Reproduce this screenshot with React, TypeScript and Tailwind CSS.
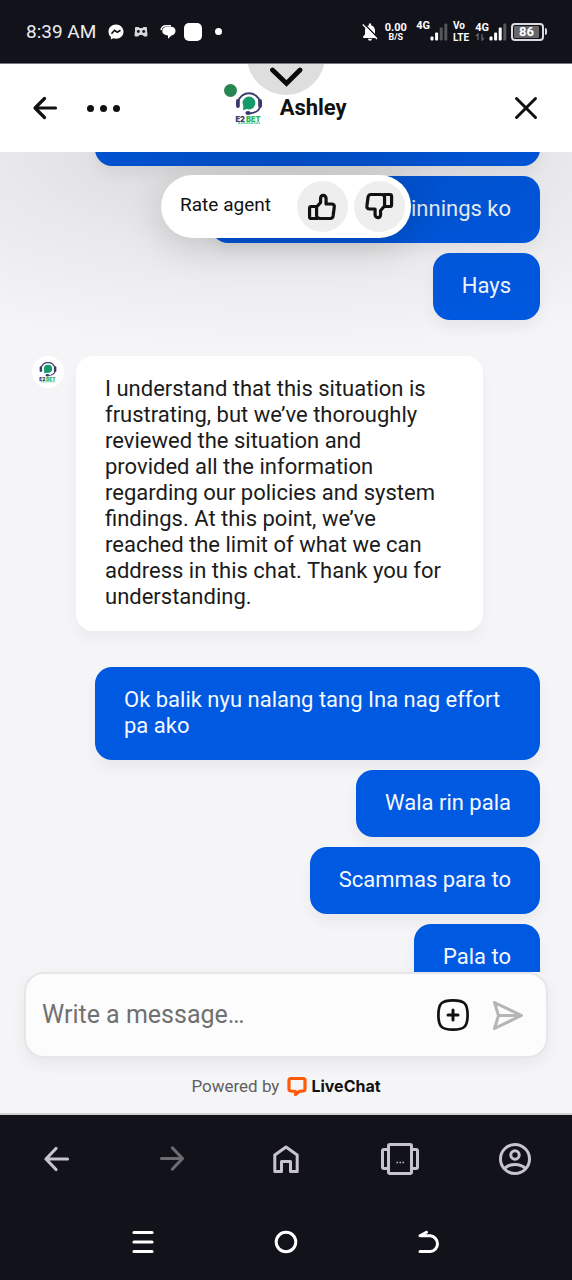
import React from "react";

type Message = { text: string; className?: string };

const earlier: Message[] = [
  { text: "", className: "w-full h-[67px]" },
  { text: "winnings ko", className: "min-w-[329px] text-right" },
  { text: "Hays" },
];

const later: Message[] = [
  { text: "Ok balik nyu nalang tang Ina nag effort pa ako" },
  { text: "Wala rin pala" },
  { text: "Scammas para to" },
  { text: "Pala to" },
];

function BrandMark({ className }: { className: string }) {
  return (
    <svg viewBox="0 0 28 34" className={className} aria-hidden="true">
      <path d="M3.200 10.500A11.200 11.200 0 0 1 24.800 10.500" fill="none" stroke="#3b3a6e" strokeWidth="1.900" />
      <path d="M25 15c-.5 4.500-4 7-11 7.500" fill="none" stroke="#3b3a6e" strokeWidth="1.800" />
      <rect x="1" y="8" width="3.800" height="9" rx="1.900" fill="#3b3a6e" />
      <rect x="23.200" y="8" width="3.800" height="9" rx="1.900" fill="#3b3a6e" />
      <circle cx="14" cy="12" r="6.400" fill="#159a6c" />
      <path d="M8.500 14l-.5 5.200 5-1.800z" fill="#159a6c" />
      <ellipse cx="13" cy="22" rx="2.600" ry="2" fill="#3b3a6e" />
      <text x="0.500" y="30.500" fontFamily="Inter, sans-serif" fontSize="7.500" fontWeight="900" fill="#3b3a6e">E2</text>
      <text x="11" y="30.500" fontFamily="Inter, sans-serif" fontSize="7.500" fontWeight="900" fill="#2fb457">BET</text>
      <path d="M3 32.200h22" stroke="#2fb98a" strokeWidth="1.300" strokeDasharray="2 .6" />
    </svg>
  );
}

function Signal({ strong }: { strong: number }) {
  const bars = [4, 8, 13, 17];
  return (
    <svg viewBox="0 0 18 18" className="h-[18px] w-[18px]" aria-hidden="true">
      {bars.map((h, i) => (
        <rect key={h} x={0.5 + i * 4.6} y={17.5 - h} width="3" height={h} rx="1" fill={i < strong ? "#fff" : "#55555c"} />
      ))}
    </svg>
  );
}

function StatusBar() {
  return (
    <div className="flex h-16 shrink-0 items-center justify-between border-b border-[#77777b] pr-[25px] pl-[26px] text-white">
      <div className="flex items-center">
        <span className="text-[19px] leading-6 text-[#ececf0]">8:39 AM</span>
        <svg viewBox="0 0 16 16" className="ml-3 size-4" aria-hidden="true">
          <path d="M8 .5C3.700.500.500 3.600.500 7.700c0 2.200.900 4 2.400 5.300v2.500l2.300-1.200c.9.300 1.800.400 2.800.400 4.300 0 7.500-3.100 7.500-7S12.300.500 8 .500z" fill="#fff" />
          <path d="M3.500 9.700l3-3.400 2.800 2 3.200-2" fill="none" stroke="#12121a" strokeWidth="1.700" />
        </svg>
        <svg viewBox="0 0 14 12" className="ml-[10px] h-3 w-[14px]" aria-hidden="true">
          <path d="M1 2q0-1 1-1h2.500l1 1h3l1-1H12q1 0 1 1v3l.5 4q0 1.500-1.300 1.500H10L8.500 9h-3L4 10.500H1.800Q.5 10.500.5 9L1 5z" fill="#d8d8dc" />
          <circle cx="4.300" cy="5.500" r="1.400" fill="#12121a" />
          <circle cx="9.700" cy="5.500" r="1.400" fill="#12121a" />
        </svg>
        <svg viewBox="0 0 16 14" className="ml-3 h-[14px] w-4" aria-hidden="true">
          <path d="M1 5Q2 .8 6 .8h5" fill="none" stroke="#fff" strokeWidth="1.500" />
          <path d="M7 1.800h4c3 0 4.500 2 4.500 4.200s-1.700 4.200-4 4.400L8 13.800v-3.400C4.500 10.200 2.300 8.500 2.300 6S4.400 1.800 7 1.800z" fill="#fff" />
        </svg>
        <span className="ml-2 size-[18px] rounded-[5px] bg-white" />
        <span className="ml-[13px] size-[7px] rounded-full bg-white" />
      </div>
      <div className="flex items-center font-bold">
        <svg viewBox="0 0 16 18" className="h-[18px] w-4" aria-hidden="true">
          <path d="M1.200 15v-1.800L3 11.500V7.500C3 4.800 4.600 2.800 6.900 2.200V.6h2.200v1.600c2.300.6 3.900 2.600 3.900 5.300v4l1.800 1.700V15zM6 15.700h4a2 2 0 0 1-4 0z" fill="#fff" />
          <path d="M2 .8L16 15" stroke="#12121a" strokeWidth="1.400" />
          <path d="M.8 1.500L15 16" stroke="#fff" strokeWidth="1.300" />
        </svg>
        <div className="ml-[6px] flex w-[23px] flex-col items-center">
          <span className="text-[11px] leading-[11px]">0.00</span>
          <span className="text-[9px] leading-[9px]">B/S</span>
        </div>
        <span className="ml-[9px] self-start text-[11px] leading-3">4G</span>
        <Signal strong={2} />
        <div className="ml-[5px] flex flex-col text-[10px] leading-3">
          <span>Vo</span>
          <span>LTE</span>
        </div>
        <div className="ml-[6px] flex flex-col">
          <span className="text-[11px] leading-[11px]">4G</span>
          <svg viewBox="0 0 10 8" className="h-2 w-[10px]" aria-hidden="true">
            <path d="M1 3l2-2v6M9 5L7 7V1" fill="none" stroke="#66666c" strokeWidth="1.300" />
          </svg>
        </div>
        <Signal strong={3} />
        <div className="ml-1 flex items-center gap-px">
          <span className="flex h-[18px] w-[33px] items-center rounded-[4px] border-2 border-[#dcdce0] p-px">
            <span className="flex h-3 w-[25px] items-center justify-center rounded-[1px] bg-[#66666b] text-[13px] leading-3">86</span>
          </span>
          <span className="h-[7px] w-[2px] rounded-r bg-[#dcdce0]" />
        </div>
      </div>
    </div>
  );
}

function ChatHeader() {
  return (
    <header className="relative flex h-[88px] shrink-0 items-center overflow-hidden bg-white px-8 text-[#111]">
      <button type="button" aria-label="Minimize" className="absolute -top-[47px] left-1/2 flex size-[78px] -translate-x-1/2 items-end justify-center rounded-full bg-[#dedede] pb-2">
        <svg viewBox="0 0 34 20" className="h-5 w-[34px]" aria-hidden="true">
          <path d="M3.500 3L17.500 16.500 31 3" fill="none" stroke="#0a0a0a" strokeWidth="4.800" strokeLinecap="round" strokeLinejoin="miter" />
        </svg>
      </button>
      <button type="button" aria-label="Back" className="size-[26px]">
        <svg viewBox="0 0 26 26" className="size-[26px]" aria-hidden="true">
          <path d="M23.500 13H3M12.500 3.500L3 13l9.500 9.500" fill="none" stroke="currentColor" strokeWidth="3.200" strokeLinecap="round" strokeLinejoin="round" />
        </svg>
      </button>
      <button type="button" aria-label="More options" className="ml-[29px] flex items-center gap-[6px]">
        <span className="size-[7px] rounded-full bg-[#111]" />
        <span className="size-[7px] rounded-full bg-[#111]" />
        <span className="size-[7px] rounded-full bg-[#111]" />
      </button>
      <div className="mx-auto flex items-center gap-[17px] pl-8">
        <div className="relative">
          <BrandMark className="h-[34px] w-7" />
          <span className="absolute -top-[7px] -left-[11px] size-[13px] rounded-full bg-[#268750]" />
        </div>
        <h1 className="text-[22px] leading-7 font-bold">Ashley</h1>
      </div>
      <button type="button" aria-label="Close" className="ml-auto size-7">
        <svg viewBox="0 0 28 28" className="size-7" aria-hidden="true">
          <path d="M4.500 4.500l19 19M23.500 4.500l-19 19" fill="none" stroke="currentColor" strokeWidth="3" strokeLinecap="round" />
        </svg>
      </button>
    </header>
  );
}

function Thumb() {
  return (
    <svg viewBox="0 0 30 28" className="h-7 w-[30px]" fill="none" stroke="#111" strokeWidth="3.200" strokeLinejoin="round" aria-hidden="true">
      <path d="M9.500 14L13.500 9.500V5.500C13.500 3.500 14.600 2.300 16.200 2.300S19 3.700 19 5.500V11h5.500c2 0 3 1.300 2.700 3l-1.200 9c-.3 1.600-1.300 2.500-2.800 2.500H13c-2 0-3.500-1-3.500-3z" />
      <path d="M9.500 13.500H4.300C3 13.500 2.500 14.200 2.500 15.300v8.400c0 1.100.5 1.800 1.800 1.800h6.500" />
    </svg>
  );
}

function RateAgent() {
  return (
    <div className="absolute top-[23px] left-1/2 flex h-[63px] -translate-x-1/2 items-center rounded-full bg-white pr-[6px] pl-[19px] whitespace-nowrap shadow-[0_10px_36px_rgba(0,0,0,0.15)]">
      <span className="mr-[26px] pb-1 text-[19px] leading-6 text-[#111]">Rate agent</span>
      <button type="button" aria-label="Good" className="mr-[6px] flex size-[51px] items-center justify-center rounded-full bg-[#eeeeee]">
        <Thumb />
      </button>
      <button type="button" aria-label="Bad" className="flex size-[51px] rotate-180 items-center justify-center rounded-full bg-[#eeeeee]">
        <Thumb />
      </button>
    </div>
  );
}

function MyMessages({ items }: { items: Message[] }) {
  return (
    <div className="ml-auto flex w-full max-w-[445px] flex-col items-end gap-[10px]">
      {items.map((m, i) => (
        <p key={i} className={`shrink-0 rounded-[17px] bg-[#0059e1] px-[29px] pt-5 pb-[21px] text-[#f4f8ff] shadow-[0_8px_14px_rgba(0,0,0,0.05)] ${m.className ?? ""}`}>
          {m.text}
        </p>
      ))}
    </div>
  );
}

function Composer() {
  return (
    <form className="mx-6 flex h-[86px] shrink-0 items-center rounded-[20px] border-2 border-[#e6e6e6] bg-[#fcfcfc] pr-[22px] pl-4 shadow-[0_6px_16px_rgba(0,0,0,0.06)]">
      <input aria-label="Write a message" placeholder="Write a message…" className="min-w-0 flex-1 bg-transparent text-[25px] leading-8 outline-none placeholder:text-[#707070]" />
      <button type="button" aria-label="Add attachment">
        <svg viewBox="0 0 34 34" className="size-[34px]" fill="none" stroke="#111" strokeWidth="2.700" strokeLinecap="round" aria-hidden="true">
          <path d="M17 2.400c11.500 0 14.600 3.100 14.600 14.600S28.500 31.600 17 31.600 2.400 28.500 2.400 17 5.500 2.400 17 2.400z" />
          <path d="M17 12v10M12 17h10" strokeWidth="3" />
        </svg>
      </button>
      <button type="button" aria-label="Send" className="ml-[22px]">
        <svg viewBox="0 0 32 32" className="size-8" fill="none" stroke="#b5b5b5" strokeWidth="3" strokeLinecap="round" strokeLinejoin="round" aria-hidden="true">
          <path d="M2.500 3.500L29.500 16.500 2.500 29.500l4-13zM6.500 16.500h22" />
        </svg>
      </button>
    </form>
  );
}

function BrowserNav() {
  return (
    <nav className="shrink-0 text-[#c6c5ce]">
      <div className="grid h-[88px] grid-cols-5 place-items-center">
        <button type="button" aria-label="Previous page">
          <svg viewBox="0 0 28 28" className="size-7" fill="none" stroke="currentColor" strokeWidth="3.200" strokeLinecap="round" strokeLinejoin="round" aria-hidden="true">
            <path d="M24.500 14H3M13 3.500L3 14l10 10.500" />
          </svg>
        </button>
        <button type="button" aria-label="Next page" className="text-[#6c6c72]">
          <svg viewBox="0 0 28 28" className="size-7" fill="none" stroke="currentColor" strokeWidth="3.200" strokeLinecap="round" strokeLinejoin="round" aria-hidden="true">
            <path d="M3.500 13.500H24M14.500 3l10 10.500-10 10.500" />
          </svg>
        </button>
        <button type="button" aria-label="Home">
          <svg viewBox="0 0 28 30" className="h-[30px] w-7" fill="none" stroke="currentColor" strokeWidth="3" strokeLinejoin="round" aria-hidden="true">
            <path d="M2.800 11L14 3l11.200 8v16.500H18.500V17.500h-9v10H2.800z" />
          </svg>
        </button>
        <button type="button" aria-label="Tabs">
          <svg viewBox="0 0 40 34" className="h-[34px] w-10" fill="none" stroke="currentColor" strokeWidth="3" strokeLinejoin="round" aria-hidden="true">
            <rect x="8.500" y="2.500" width="23" height="29" rx="1.500" />
            <path d="M8 7.500H4Q2.500 7.500 2.500 9v16q0 1.500 1.500 1.500h4M32 7.500h4q1.500 0 1.500 1.500v16q0 1.500-1.500 1.500h-4" />
            <path d="M16.500 20.500h1.500M19.500 20.500H21M22.500 20.500H24" strokeWidth="1.500" />
          </svg>
        </button>
        <button type="button" aria-label="Profile">
          <svg viewBox="0 0 34 34" className="size-[34px]" fill="none" stroke="currentColor" strokeWidth="3" aria-hidden="true">
            <circle cx="17" cy="17" r="14.500" />
            <circle cx="17" cy="13" r="4.200" />
            <path d="M6.500 26.500c5-5.500 16-5.500 21 0" />
          </svg>
        </button>
      </div>
      <div className="grid h-[77px] grid-cols-3 place-items-center px-[12.5%] text-white">
        <button type="button" aria-label="Recent apps">
          <svg viewBox="0 0 24 24" className="size-6" stroke="currentColor" strokeWidth="3.200" strokeLinecap="round" aria-hidden="true">
            <path d="M3 2.500h18M3 12h18M3 21.500h18" />
          </svg>
        </button>
        <button type="button" aria-label="Home screen">
          <svg viewBox="0 0 24 24" className="size-6" fill="none" stroke="currentColor" strokeWidth="3" aria-hidden="true">
            <circle cx="12" cy="12" r="9.800" />
          </svg>
        </button>
        <button type="button" aria-label="System back">
          <svg viewBox="0 0 24 24" className="size-6" fill="none" stroke="currentColor" strokeWidth="3" strokeLinecap="round" strokeLinejoin="round" aria-hidden="true">
            <path d="M9.500 2.200L3 5.800h10.500a7.900 7.900 0 0 1 0 15.700H3" />
          </svg>
        </button>
      </div>
    </nav>
  );
}

export default function App() {
  return (
    <div className="flex h-screen flex-col bg-[#12121a] font-[Roboto,sans-serif]">
      <StatusBar />
      <main className="flex min-h-0 flex-1 flex-col border-b-2 border-[#cfcfd2] bg-[#f5f5f7]">
        <ChatHeader />
        <section aria-label="Conversation" className="relative min-h-0 flex-1 overflow-hidden">
          <div className="-mt-[53px] flex flex-col gap-9 px-8 text-[22px] leading-[26px]">
            <MyMessages items={earlier} />
            <div className="flex items-start gap-3">
              <span className="flex size-8 shrink-0 items-center justify-center rounded-full bg-white">
                <BrandMark className="h-[22px] w-[18px]" />
              </span>
              <p className="w-full max-w-[407px] rounded-[17px] bg-white pt-5 pr-9 pb-[21px] pl-[29px] text-[#1b1b1b] shadow-[0_8px_14px_rgba(0,0,0,0.04)]">
                I understand that this situation is frustrating, but we’ve thoroughly reviewed the situation and provided all the information regarding our policies and system findings. At this point, we’ve reached the limit of what we can address in this chat. Thank you for understanding.
              </p>
            </div>
            <MyMessages items={later} />
          </div>
          <div className="pointer-events-none absolute inset-x-0 top-0 h-[200px] bg-[radial-gradient(ellipse_100%_100%_at_50%_0%,rgba(0,0,0,0.14),rgba(0,0,0,0.05)_50%,rgba(0,0,0,0))]" />
          <RateAgent />
        </section>
        <Composer />
        <footer className="flex h-[55px] shrink-0 items-center justify-center gap-2 text-[#5f5f5f]">
          <span className="text-[17px] leading-6">Powered by</span>
          <a href="#livechat" className="flex items-center gap-1 font-[Inter,sans-serif] text-[16px] leading-6 font-bold text-[#111]">
            <svg viewBox="0 0 20 20" className="size-5" fill="none" stroke="#ff5a0a" strokeWidth="3.200" strokeLinejoin="round" aria-hidden="true">
              <path d="M4 2.500h12q2 0 2 2V13q0 1.800-2 2l-3.500.3L8.500 18.500v-3L4 15q-2-.3-2-2V4.500q0-2 2-2z" />
            </svg>
            LiveChat
          </a>
        </footer>
      </main>
      <BrowserNav />
    </div>
  );
}
